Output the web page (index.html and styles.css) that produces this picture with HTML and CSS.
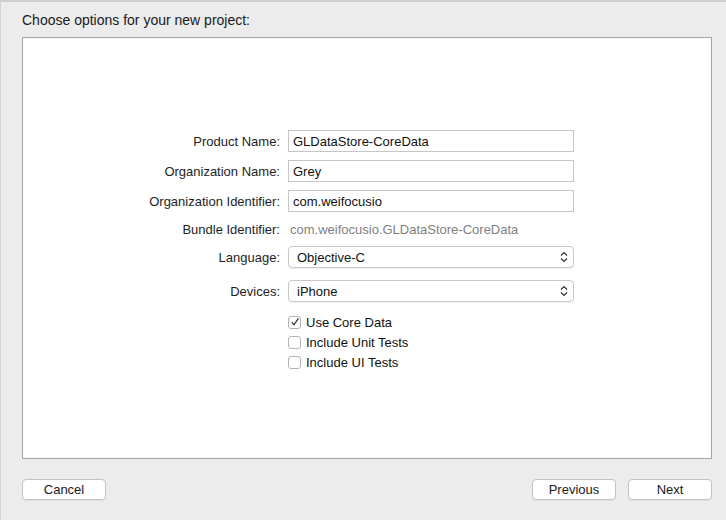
FILE: index.html
```html
<!DOCTYPE html>
<html>
<head>
<meta charset="utf-8">
<link rel="stylesheet" href="styles.css">
</head>
<body>
<div class="window">
  <div class="title">Choose options for your new project:</div>
  <div class="panel">
    <div class="form">
      <div class="row field-row">
        <div class="label">Product Name:</div>
        <div class="input">GLDataStore-CoreData</div>
      </div>
      <div class="row field-row">
        <div class="label">Organization Name:</div>
        <div class="input">Grey</div>
      </div>
      <div class="row field-row">
        <div class="label">Organization Identifier:</div>
        <div class="input">com.weifocusio</div>
      </div>
      <div class="row bundle-row">
        <div class="label">Bundle Identifier:</div>
        <div class="value">com.weifocusio.GLDataStore-CoreData</div>
      </div>
      <div class="row popup-row">
        <div class="label">Language:</div>
        <div class="popup"><span>Objective-C</span>
          <svg class="chev" width="8" height="12" viewBox="0 0 8 12"><path d="M1 4.5 L4 1.5 L7 4.5 M1 7.5 L4 10.5 L7 7.5" fill="none" stroke="#333" stroke-width="1.2"/></svg>
        </div>
      </div>
      <div class="row popup-row">
        <div class="label">Devices:</div>
        <div class="popup"><span>iPhone</span>
          <svg class="chev" width="8" height="12" viewBox="0 0 8 12"><path d="M1 4.5 L4 1.5 L7 4.5 M1 7.5 L4 10.5 L7 7.5" fill="none" stroke="#333" stroke-width="1.2"/></svg>
        </div>
      </div>
      <div class="row check-row">
        <div class="label"></div>
        <div class="check"><span class="box"><svg width="10" height="10" viewBox="0 0 10 10"><path d="M1.8 5.2 L4 7.8 L8.4 1.4" fill="none" stroke="#333" stroke-width="1.3"/></svg></span>Use Core Data</div>
      </div>
      <div class="row check-row">
        <div class="label"></div>
        <div class="check"><span class="box"></span>Include Unit Tests</div>
      </div>
      <div class="row check-row">
        <div class="label"></div>
        <div class="check"><span class="box"></span>Include UI Tests</div>
      </div>
    </div>
  </div>
  <div class="footer">
    <button class="btn">Cancel</button>
    <div class="right-btns">
      <button class="btn">Previous</button>
      <button class="btn">Next</button>
    </div>
  </div>
</div>
</body>
</html>
```
FILE: styles.css
```css
html, body {
  margin: 0;
  padding: 0;
  background: #ececec;
}
body {
  font-family: "Liberation Sans", Arial, sans-serif;
  font-size: 13px;
  color: #1a1a1a;
  width: 726px;
  height: 520px;
  overflow: hidden;
}
.window {
  height: 518px;
  border-top: 2px solid #cfcfcf;
  box-shadow: inset 2px 0 0 -1px #d4d4d4;
}
.title {
  margin: 10px 0 0 22px;
  height: 16px;
  line-height: 16px;
  font-size: 14px;
}
.panel {
  margin: 9px 14px 0 22px;
  height: 422px;
  box-sizing: border-box;
  background: #fff;
  border: 1px solid #a3a3a3;
  padding-top: 92px;
}
.form {
  display: flex;
  flex-direction: column;
}
.row {
  display: flex;
  align-items: center;
  gap: 8px;
}
.label {
  width: 257px;
  text-align: right;
  flex-shrink: 0;
  color: #1e1e1e;
}
.field-row {
  height: 22px;
  margin-bottom: 8px;
}
.input {
  width: 286px;
  height: 22px;
  box-sizing: border-box;
  border: 1px solid #c6c6c6;
  padding: 0 4px;
  line-height: 21px;
  color: #111;
}
.bundle-row {
  height: 18px;
  margin-bottom: 8px;
}
.value {
  color: #7f7f7f;
  padding-left: 2px;
}
.popup-row {
  height: 22px;
  margin-bottom: 12px;
}
.popup {
  width: 286px;
  height: 22px;
  box-sizing: border-box;
  border: 1px solid #c8c8c8;
  border-radius: 4px;
  box-shadow: 0 1px 0 rgba(0,0,0,0.06);
  padding: 0 5px 0 8px;
  display: flex;
  align-items: center;
  justify-content: space-between;
  color: #111;
}
.chev {
  display: block;
}
.check-row {
  height: 20px;
}
.popup-row + .check-row {
  margin-top: -2px;
}
.check {
  display: flex;
  align-items: center;
  gap: 5px;
  color: #111;
}
.box {
  width: 13px;
  height: 13px;
  box-sizing: border-box;
  border: 1px solid #b4b4b4;
  border-radius: 3px;
  background: #fff;
  display: flex;
  align-items: center;
  justify-content: center;
}
.box svg {
  display: block;
}
.footer {
  margin: 20px 14px 0 22px;
  display: flex;
  justify-content: space-between;
}
.right-btns {
  display: flex;
  gap: 12px;
}
.btn {
  width: 84px;
  height: 21px;
  box-sizing: border-box;
  background: #fff;
  border: 1px solid #c3c3c3;
  border-radius: 4px;
  box-shadow: 0 1px 0 rgba(0,0,0,0.05);
  font-family: "Liberation Sans", Arial, sans-serif;
  font-size: 13px;
  color: #1a1a1a;
  padding: 0;
  line-height: 19px;
}
```
